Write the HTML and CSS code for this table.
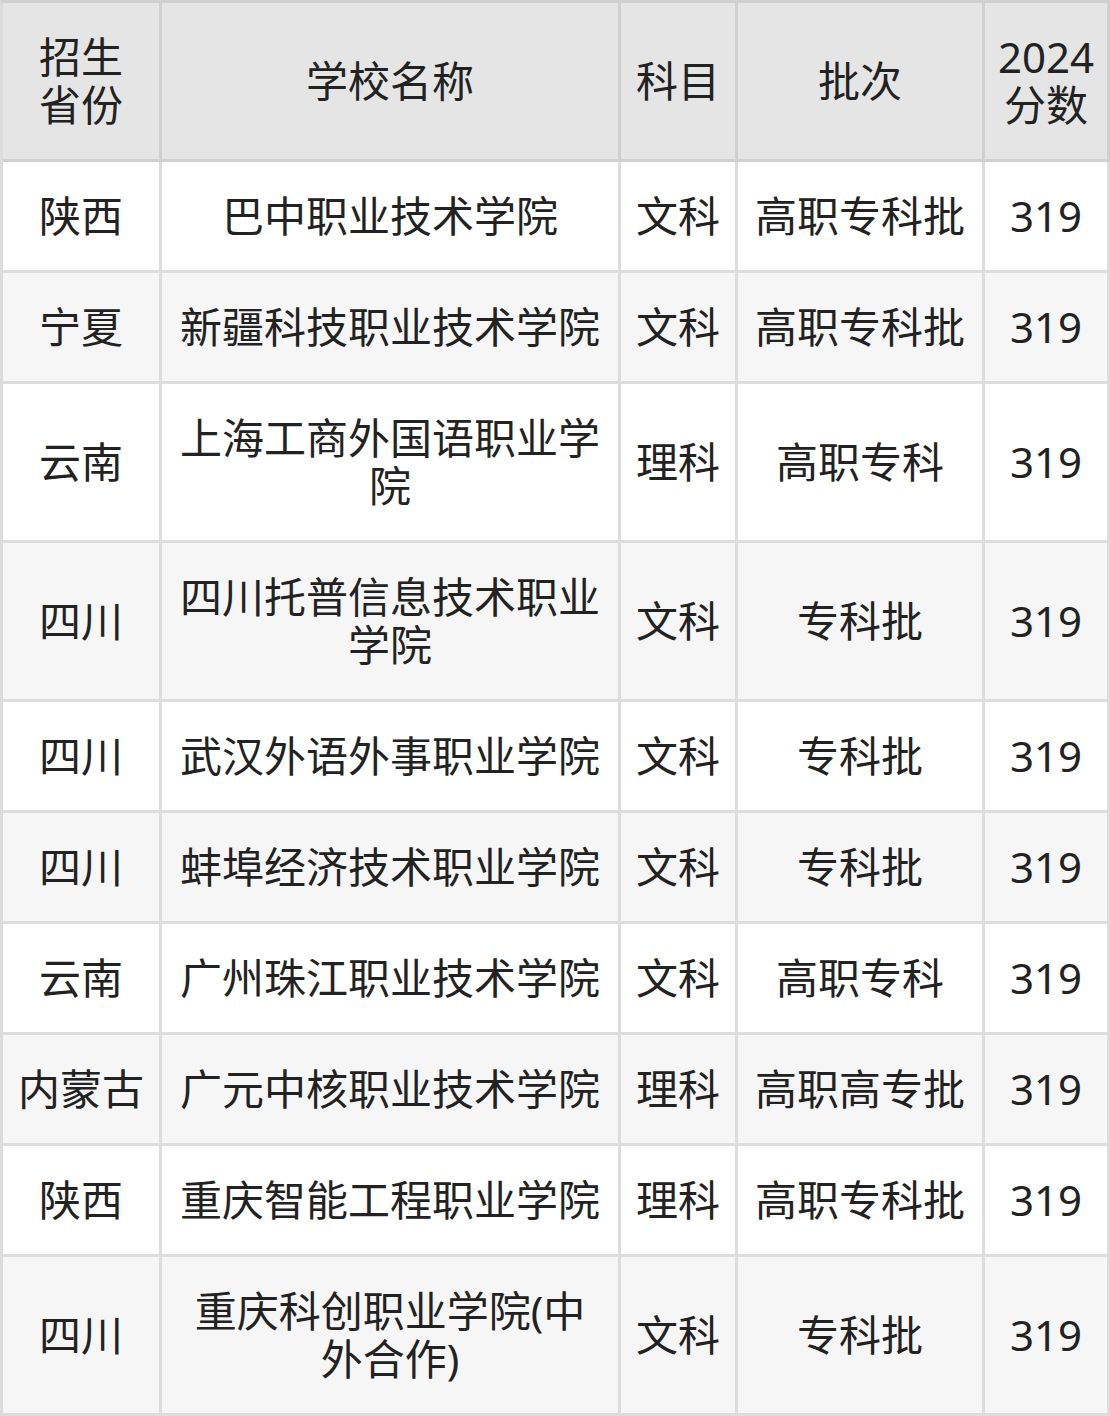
FILE: index.html
```html
<!DOCTYPE html>
<html lang="zh-CN">
<head>
<meta charset="utf-8">
<link rel="stylesheet" href="styles.css">
</head>
<body>
<table class="score-table">
  <colgroup>
    <col class="c1"><col class="c2"><col class="c3"><col class="c4"><col class="c5">
  </colgroup>
  <thead>
    <tr>
      <th>招生<br>省份</th>
      <th>学校名称</th>
      <th>科目</th>
      <th>批次</th>
      <th class="num">2024<br>分数</th>
    </tr>
  </thead>
  <tbody>
    <tr><td>陕西</td><td>巴中职业技术学院</td><td>文科</td><td>高职专科批</td><td class="num">319</td></tr>
    <tr><td>宁夏</td><td>新疆科技职业技术学院</td><td>文科</td><td>高职专科批</td><td class="num">319</td></tr>
    <tr><td>云南</td><td>上海工商外国语职业学院</td><td>理科</td><td>高职专科</td><td class="num">319</td></tr>
    <tr><td>四川</td><td>四川托普信息技术职业学院</td><td>文科</td><td>专科批</td><td class="num">319</td></tr>
    <tr><td>四川</td><td>武汉外语外事职业学院</td><td>文科</td><td>专科批</td><td class="num">319</td></tr>
    <tr><td>四川</td><td>蚌埠经济技术职业学院</td><td>文科</td><td>专科批</td><td class="num">319</td></tr>
    <tr><td>云南</td><td>广州珠江职业技术学院</td><td>文科</td><td>高职专科</td><td class="num">319</td></tr>
    <tr><td>内蒙古</td><td>广元中核职业技术学院</td><td>理科</td><td>高职高专批</td><td class="num">319</td></tr>
    <tr><td>陕西</td><td>重庆智能工程职业学院</td><td>理科</td><td>高职专科批</td><td class="num">319</td></tr>
    <tr><td>四川</td><td>重庆科创职业学院(中外合作)</td><td>文科</td><td>专科批</td><td class="num">319</td></tr>
  </tbody>
</table>
</body>
</html>
```
FILE: styles.css
```css
html, body {
  margin: 0;
  padding: 0;
  background: #ffffff;
}

.score-table {
  width: 1110px;
  table-layout: fixed;
  border-collapse: separate;
  border-spacing: 0;
  border-left: 3px solid #dcdcdc;
  border-top: 3px solid #d0d0d0;
  font-family: "Noto Sans", "Noto Sans CJK SC", sans-serif;
  font-size: 42px;
  line-height: 48px;
  color: #222222;
}

.c1 { width: 159px; }
.c2 { width: 459px; }
.c3 { width: 117px; }
.c4 { width: 247px; }
.c5 { width: 125px; }

.score-table th,
.score-table td {
  padding: 30px 14px;
  text-align: center;
  vertical-align: middle;
  font-weight: 400;
  border-right: 3px solid #dddddd;
  border-bottom: 3px solid #dddddd;
}

.score-table th {
  background: #e5e5e5;
  border-right-color: #d0d0d0;
  border-bottom-color: #d0d0d0;
}

.score-table .num {
  padding-left: 8px;
  padding-right: 8px;
}

.score-table tbody tr:nth-child(even) td {
  background: #f6f6f6;
}
```
